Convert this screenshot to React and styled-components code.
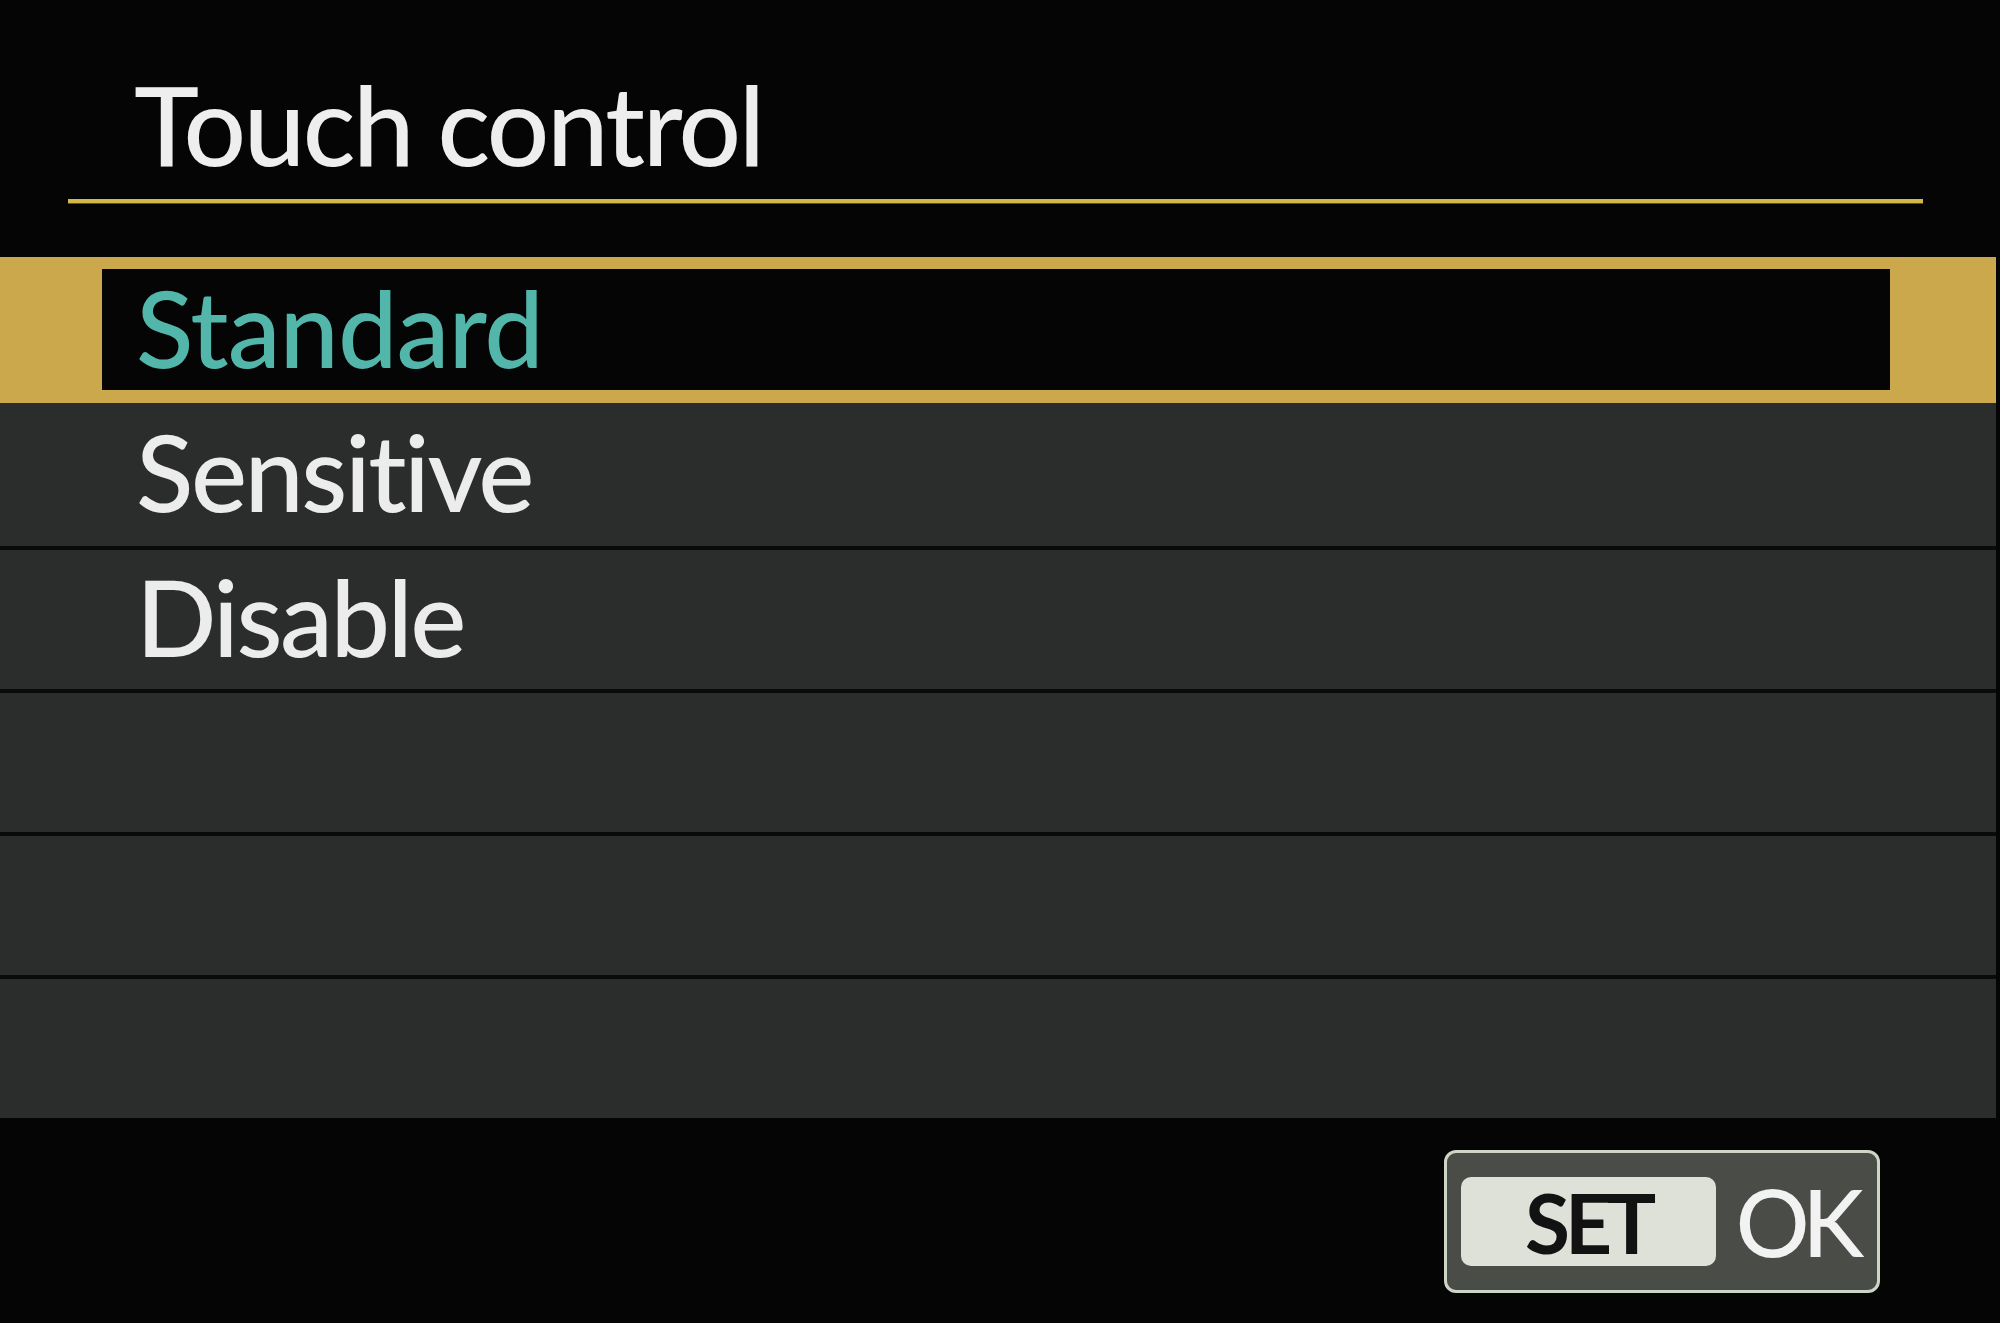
import React from "react";
import styled, { createGlobalStyle } from "styled-components";

const GlobalStyle = createGlobalStyle`
  html, body {
    margin: 0;
    padding: 0;
    background: #050505;
  }
  body {
    font-family: Lato, "Open Sans", "Noto Sans", sans-serif;
  }
`;

const Screen = styled.div`
  width: 2000px;
  height: 1323px;
  display: flex;
  flex-direction: column;
  background: #050505;
  color: #ececec;
  overflow: hidden;
`;

const Header = styled.header`
  padding: 68px 77px 0 68px;
`;

const Title = styled.h1`
  margin: 0;
  padding-left: 66px;
  font-size: 110px;
  line-height: 1;
  font-weight: 500;
  letter-spacing: -2.4px;
  color: #eeeeee;
`;

/* 제목 아래 금색 구분선 */
const TitleRule = styled.div`
  margin-top: 21px;
  height: 4px;
  background: #d2b84a;
  box-shadow: 0 1px 0 #8a3a20;
`;

const List = styled.ul`
  list-style: none;
  margin: 54px 4px 0 0;
  padding: 0;
  display: flex;
  flex-direction: column;
`;

const SelectedBand = styled.li`
  height: 146px;
  box-sizing: border-box;
  padding: 12px 106px 13px 102px;
  background: #cba84c;
  display: flex;
`;

const SelectedInner = styled.div`
  flex: 1;
  display: flex;
  align-items: center;
  padding: 0 0 6px 34px;
  background: #050505;
`;

const Row = styled.li`
  height: 143px;
  box-sizing: border-box;
  display: flex;
  align-items: center;
  padding: 0 0 8px 136px;
  background: #2a2d2c;
  & + & {
    border-top: 4px solid #0a0a0b;
  }
`;

const ItemText = styled.span`
  font-size: 106px;
  line-height: 1;
  font-weight: 500;
  letter-spacing: ${(p) => (p.$active ? "-1px" : "-2.5px")};
  color: ${(p) => (p.$active ? "#52b6aa" : "#ececec")};
`;

const Footer = styled.footer`
  display: flex;
  justify-content: flex-end;
  padding: 32px 120px 0 0;
`;

const SetOkButton = styled.div`
  display: flex;
  align-items: center;
  gap: 20px;
  box-sizing: border-box;
  height: 143px;
  padding: 0 20px 0 14px;
  border: 3px solid #cdd6c6;
  border-radius: 12px;
  background: #4a4c48;
`;

const SetPill = styled.span`
  width: 255px;
  height: 89px;
  display: flex;
  align-items: center;
  justify-content: center;
  border-radius: 10px;
  background: #dde1d8;
  color: #121212;
  font-size: 82px;
  font-weight: 700;
  letter-spacing: -5px;
  line-height: 1;
`;

const OkLabel = styled.span`
  color: #f2f2f2;
  font-size: 92px;
  font-weight: 500;
  letter-spacing: -7px;
  line-height: 1;
`;

const options = [
  { id: "standard", label: "Standard" },
  { id: "sensitive", label: "Sensitive" },
  { id: "disable", label: "Disable" },
  { id: "e1", label: "" },
  { id: "e2", label: "" },
  { id: "e3", label: "" },
];

const App = () => {
  const selected = "standard";

  return (
    <>
      <GlobalStyle />
      <Screen>
        <Header>
          <Title>Touch control</Title>
          <TitleRule />
        </Header>
        <List>
          {options.map((opt) =>
            opt.id === selected ? (
              <SelectedBand key={opt.id}>
                <SelectedInner>
                  <ItemText $active>{opt.label}</ItemText>
                </SelectedInner>
              </SelectedBand>
            ) : (
              <Row key={opt.id}>
                <ItemText>{opt.label}</ItemText>
              </Row>
            )
          )}
        </List>
        <Footer>
          <SetOkButton>
            <SetPill>SET</SetPill>
            <OkLabel>OK</OkLabel>
          </SetOkButton>
        </Footer>
      </Screen>
    </>
  );
};

export default App;
